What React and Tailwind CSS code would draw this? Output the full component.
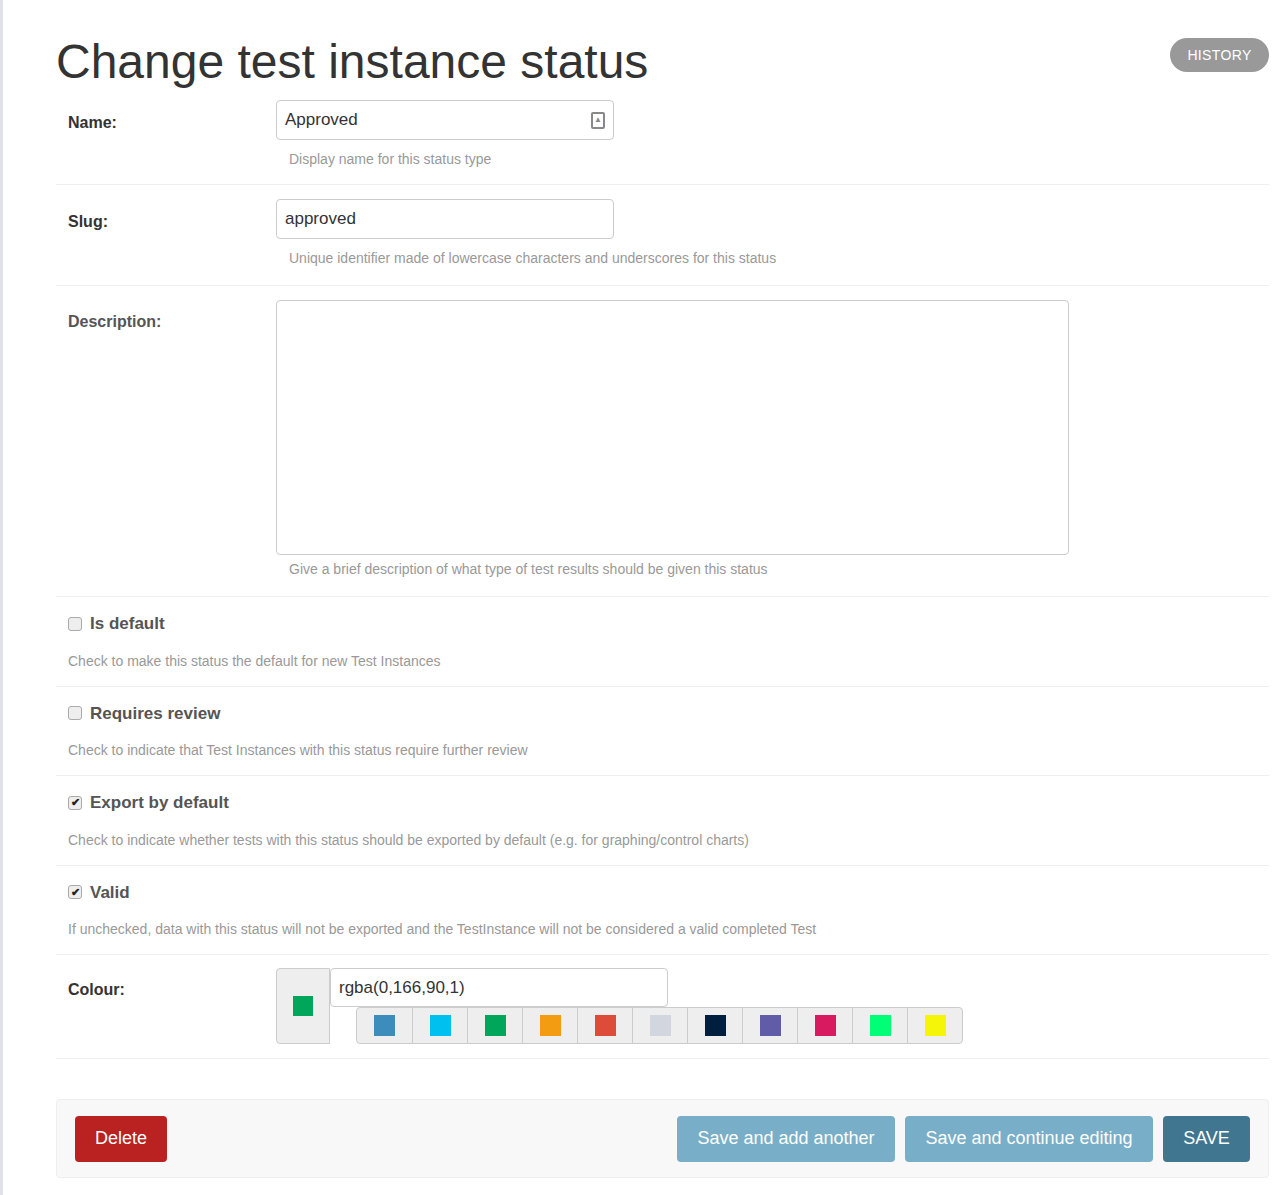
export default function App() {
  const f = { fontFamily: '"Liberation Sans", Arial, sans-serif' };
  const sw = ['#3c8dbc', '#00c0ef', '#00a65a', '#f39c12', '#dd4b39', '#d2d6de', '#001f3f', '#605ca8', '#d81b60', '#00ff77', '#f5f50a'];
  const Help = ({ children, cls = '' }) => <div className={`text-[14px] text-[#999] ${cls}`}>{children}</div>;
  const Check = ({ label, help, checked, top }) => (
    <div className="border-b border-[#eee] pt-[14px] pb-[14px] pl-[12px]">
      <label className="flex items-center gap-[8px] text-[17px] font-bold text-[#555]">
        <span className="w-[14px] h-[14px] rounded-[3px] border border-[#aaa] bg-[#eee] flex items-center justify-center text-[11px] leading-none text-[#222]">{checked ? '✔' : ''}</span>
        {label}
      </label>
      <Help cls="mt-[14px]">{help}</Help>
    </div>
  );
  return (
    <div style={f} className="min-h-[1195px] w-[1279px] bg-white border-l-[3px] border-[#dfe2e8] text-[#333]">
      <div className="ml-[53px] w-[1213px] pt-[34px]">
        <div className="flex justify-between items-start">
          <h1 className="text-[48px] leading-[56px] text-[#333]">Change test instance status</h1>
          <button className="mt-[4px] w-[99px] h-[34px] rounded-full bg-[#999] text-white text-[14px] tracking-wide">HISTORY</button>
        </div>
        <div className="border-b border-[#eee] flex pt-[10px] pb-[14px]">
          <div className="w-[220px] pl-[12px] pt-[11px] font-bold text-[16px]">Name:</div>
          <div>
            <div className="w-[338px] h-[40px] border border-[#ccc] rounded-[4px] flex items-center justify-between px-[8px] text-[17px]">
              Approved
              <span className="w-[14px] h-[17px] border-2 border-[#888] rounded-[2px] flex items-center justify-center text-[8px] text-[#888]">▲</span>
            </div>
            <Help cls="mt-[9px] ml-[13px]">Display name for this status type</Help>
          </div>
        </div>
        <div className="border-b border-[#eee] flex pt-[14px] pb-[16px]">
          <div className="w-[220px] pl-[12px] pt-[11px] font-bold text-[16px]">Slug:</div>
          <div>
            <div className="w-[338px] h-[40px] border border-[#ccc] rounded-[4px] flex items-center px-[8px] text-[17px]">approved</div>
            <Help cls="mt-[9px] ml-[13px]">Unique identifier made of lowercase characters and underscores for this status</Help>
          </div>
        </div>
        <div className="border-b border-[#eee] flex pt-[14px] pb-[16px]">
          <div className="w-[220px] pl-[12px] pt-[10px] font-bold text-[16px] text-[#555]">Description:</div>
          <div>
            <div className="w-[793px] h-[255px] border border-[#ccc] rounded-[4px]"></div>
            <Help cls="mt-[4px] ml-[13px]">Give a brief description of what type of test results should be given this status</Help>
          </div>
        </div>
        <Check label="Is default" help="Check to make this status the default for new Test Instances" />
        <Check label="Requires review" help="Check to indicate that Test Instances with this status require further review" />
        <Check label="Export by default" checked help="Check to indicate whether tests with this status should be exported by default (e.g. for graphing/control charts)" />
        <Check label="Valid" checked help="If unchecked, data with this status will not be exported and the TestInstance will not be considered a valid completed Test" />
        <div className="border-b border-[#eee] flex pt-[13px] pb-[14px]">
          <div className="w-[220px] pl-[12px] pt-[10px] font-bold text-[16px]">Colour:</div>
          <div className="flex">
            <div className="w-[54px] h-[76px] bg-[#eee] border border-[#ccc] rounded-l-[4px] flex items-center justify-center">
              <span className="w-[20px] h-[20px] bg-[#00a65a]"></span>
            </div>
            <div>
              <div className="w-[338px] h-[39px] border border-[#ccc] rounded-[4px] flex items-center px-[8px] text-[17px]">rgba(0,166,90,1)</div>
              <div className="ml-[26px] flex border border-[#ccc] rounded-[4px] bg-[#eee] w-fit">
                {sw.map((c, i) => (
                  <div key={c} className={`w-[55px] h-[35px] flex items-center justify-center ${i ? 'border-l border-[#ccc]' : ''}`}>
                    <span className="w-[21px] h-[21px]" style={{ background: c }}></span>
                  </div>
                ))}
              </div>
            </div>
          </div>
        </div>
        <div className="mt-[40px] h-[79px] bg-[#f8f8f8] border border-[#eee] rounded-[4px] flex items-center px-[18px]">
          <button className="w-[92px] h-[46px] bg-[#ba2121] text-white text-[18px] rounded-[4px]">Delete</button>
          <div className="ml-auto flex gap-[10px]">
            <button className="w-[218px] h-[46px] bg-[#79aec8] text-white text-[18px] rounded-[4px]">Save and add another</button>
            <button className="w-[248px] h-[46px] bg-[#79aec8] text-white text-[18px] rounded-[4px]">Save and continue editing</button>
            <button className="w-[87px] h-[46px] bg-[#417690] text-white text-[18px] rounded-[4px]">SAVE</button>
          </div>
        </div>
      </div>
    </div>
  );
}
